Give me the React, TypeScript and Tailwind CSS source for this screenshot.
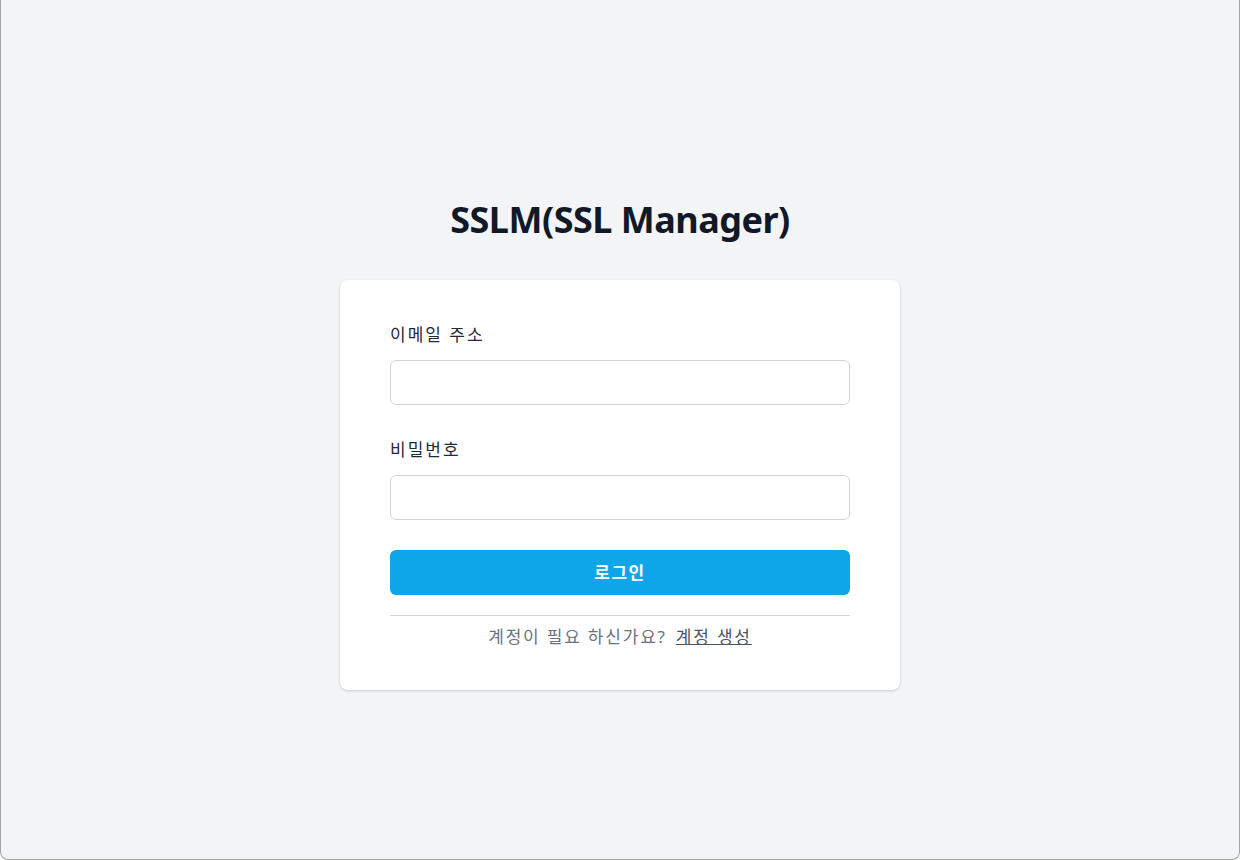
export default function App() {
  return (
    <div
      className="min-h-screen h-[860px] bg-[#f3f4f6] border-l border-r border-b border-[#a3a3a3] rounded-b-[8px] flex flex-col items-center pt-[200px]"
      style={{ fontFamily: '"Noto Sans", "Noto Sans CJK KR", sans-serif' }}
    >
      <h1 className="text-[36px] leading-[40px] font-bold text-[#111827] tracking-[-0.5px]">
        SSLM(SSL Manager)
      </h1>
      <div className="mt-[40px] w-[560px] bg-white rounded-[8px] shadow-[0_1px_3px_rgba(0,0,0,0.12),0_1px_2px_rgba(0,0,0,0.06)] px-[50px] pt-[43px] pb-[41px]">
        <label className="block text-[17px] leading-[24px] tracking-[2px] text-[#1f2937]">이메일 주소</label>
        <input
          type="email"
          className="mt-[13px] block w-full h-[45px] rounded-[6px] border border-[#d1d5db] bg-white outline-none"
        />
        <label className="mt-[33px] block text-[17px] leading-[24px] tracking-[2px] text-[#1f2937]">비밀번호</label>
        <input
          type="password"
          className="mt-[13px] block w-full h-[45px] rounded-[6px] border border-[#d1d5db] bg-white outline-none"
        />
        <button className="mt-[30px] w-full h-[45px] rounded-[6px] bg-[#0ea5e9] text-white font-bold text-[17px] tracking-[1.5px]">
          로그인
        </button>
        <div className="mt-[20px] border-t border-[#d1d5db]" />
        <p className="mt-[9px] text-center text-[17px] leading-[24px] tracking-[1.8px] text-[#6b7280]">
          계정이 필요 하신가요?
          <a href="#" className="ml-[9px] underline text-[#4b5563]">계정 생성</a>
        </p>
      </div>
    </div>
  );
}
